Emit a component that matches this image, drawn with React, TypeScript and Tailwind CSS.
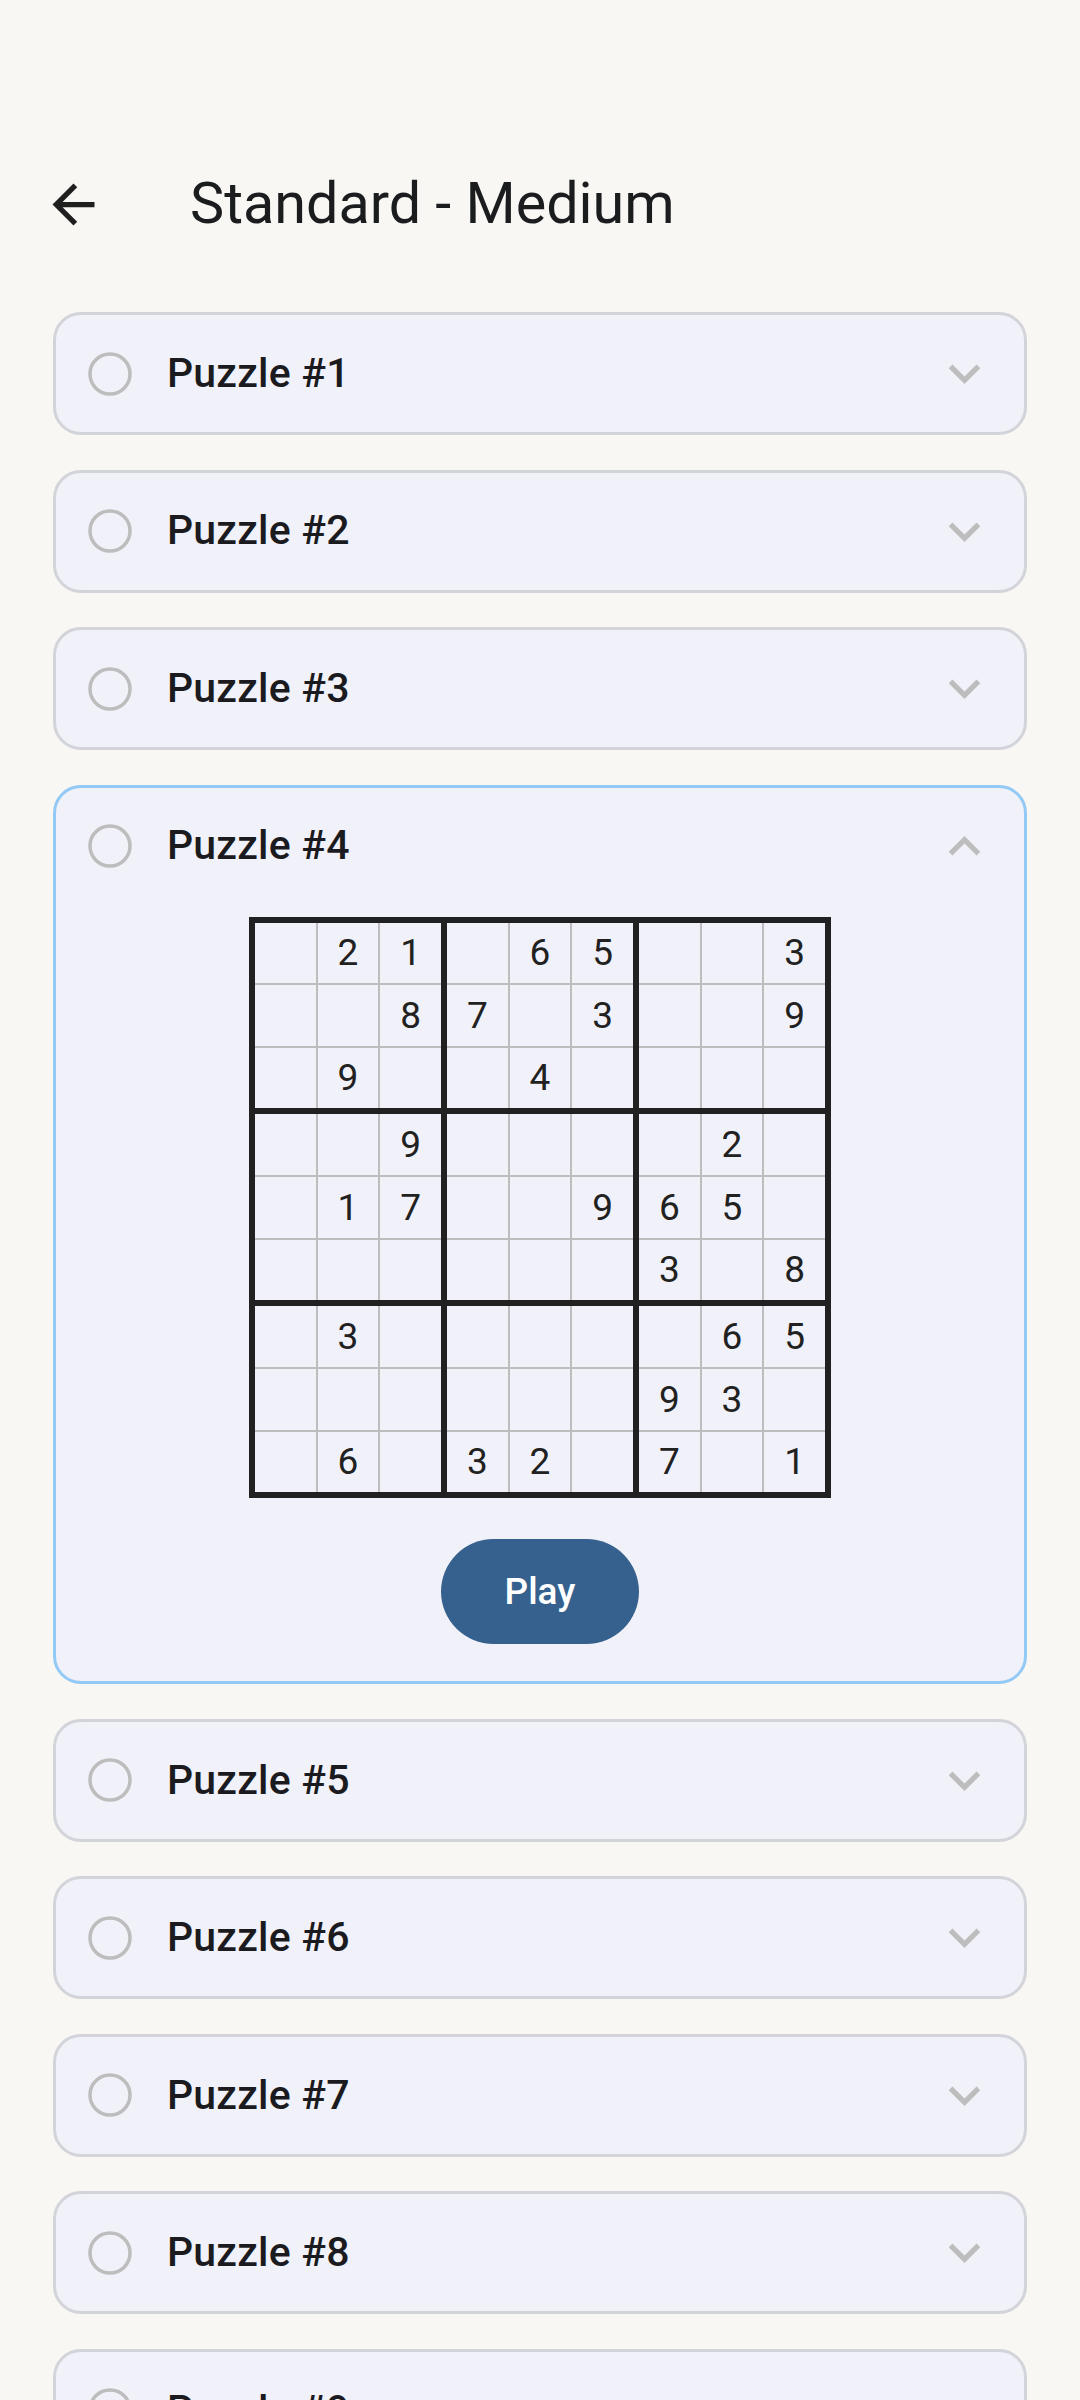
import React from 'react';

const puzzle: number[][] = [
  [0, 2, 1, 0, 6, 5, 0, 0, 3],
  [0, 0, 8, 7, 0, 3, 0, 0, 9],
  [0, 9, 0, 0, 4, 0, 0, 0, 0],
  [0, 0, 9, 0, 0, 0, 0, 2, 0],
  [0, 1, 7, 0, 0, 9, 6, 5, 0],
  [0, 0, 0, 0, 0, 0, 3, 0, 8],
  [0, 3, 0, 0, 0, 0, 0, 6, 5],
  [0, 0, 0, 0, 0, 0, 9, 3, 0],
  [0, 6, 0, 3, 2, 0, 7, 0, 1],
];

const ArrowBack = () => (
  <svg width="63" height="63" viewBox="0 0 24 24" fill="#1f1f1f">
    <path d="M20 11H7.83l5.59-5.59L12 4l-8 8 8 8 1.41-1.41L7.83 13H20v-2z" />
  </svg>
);

const Radio = () => (
  <svg width="44" height="44" viewBox="0 0 44 44" className="shrink-0">
    <circle cx="22" cy="22" r="20" fill="none" stroke="#bdbdbd" strokeWidth="3.5" />
  </svg>
);

const Chevron = ({ up }: { up?: boolean }) => (
  <svg width="63" height="63" viewBox="0 0 24 24" fill="#bdbdbd" className="shrink-0">
    {up ? (
      <path d="M12 8l-6 6 1.41 1.41L12 10.83l4.59 4.58L18 14z" />
    ) : (
      <path d="M16.59 8.59L12 13.17 7.41 8.59 6 10l6 6 6-6z" />
    )}
  </svg>
);

const CardHeader = ({ n, open }: { n: number; open?: boolean }) => (
  <div className="flex h-[117px] shrink-0 items-center pl-[32px] pr-[28px]">
    <Radio />
    <span className="ml-[35px] flex-1 text-[41px] font-medium tracking-[0.2px] text-[#1b1b1f]">Puzzle #{n}</span>
    <Chevron up={open} />
  </div>
);

// 3x3 boxes, lines come from the gaps showing the background through
const SudokuGrid = () => (
  <div className="grid w-[582px] grid-cols-3 gap-[6px] bg-[#212121] p-[6px]">
    {[0, 1, 2].map((br) =>
      [0, 1, 2].map((bc) => (
        <div key={`${br}-${bc}`} className="grid grid-cols-3 gap-[2px] bg-[#bdbdbd]">
          {[0, 1, 2].map((r) =>
            [0, 1, 2].map((c) => {
              const v = puzzle[br * 3 + r][bc * 3 + c];
              return (
                <div
                  key={`${r}-${c}`}
                  className="flex h-[60.67px] items-center justify-center bg-[#f1f2f9] text-[37px] text-[#212121]"
                >
                  {v ? v : ''}
                </div>
              );
            })
          )}
        </div>
      ))
    )}
  </div>
);

export default function App() {
  const before = [1, 2, 3];
  const after = [5, 6, 7, 8, 9];

  return (
    <div className="h-[2400px] w-[1080px] overflow-hidden bg-[#f8f7f4] font-['Roboto',sans-serif]">
      {/* Toolbar */}
      <div className="mt-[162px] flex h-[84px] items-center pl-[42px]">
        <ArrowBack />
        <h1 className="ml-[85px] text-[57.5px] leading-none font-normal text-[#1a1c1e]">Standard - Medium</h1>
      </div>

      <div className="mt-[66px] flex flex-col gap-[34.5px] px-[53px]">
        {before.map((n) => (
          <div key={n} className="h-[123px] rounded-[28px] border-[3px] border-[#d3d3da] bg-[#f1f2f9]">
            <CardHeader n={n} />
          </div>
        ))}

        {/* Expanded puzzle */}
        <div className="flex flex-col items-stretch rounded-[28px] border-[3px] border-[#93c9f5] bg-[#f1f2f9] pb-[37px]">
          <CardHeader n={4} open />
          <div className="mt-[12px] flex justify-center">
            <SudokuGrid />
          </div>
          <div className="mt-[41px] flex justify-center">
            <button className="h-[105px] w-[198px] rounded-full bg-[#36618e] text-[37px] font-medium text-white">
              Play
            </button>
          </div>
        </div>

        {after.map((n) => (
          <div key={n} className="h-[123px] shrink-0 rounded-[28px] border-[3px] border-[#d3d3da] bg-[#f1f2f9]">
            <CardHeader n={n} />
          </div>
        ))}
      </div>
    </div>
  );
}
